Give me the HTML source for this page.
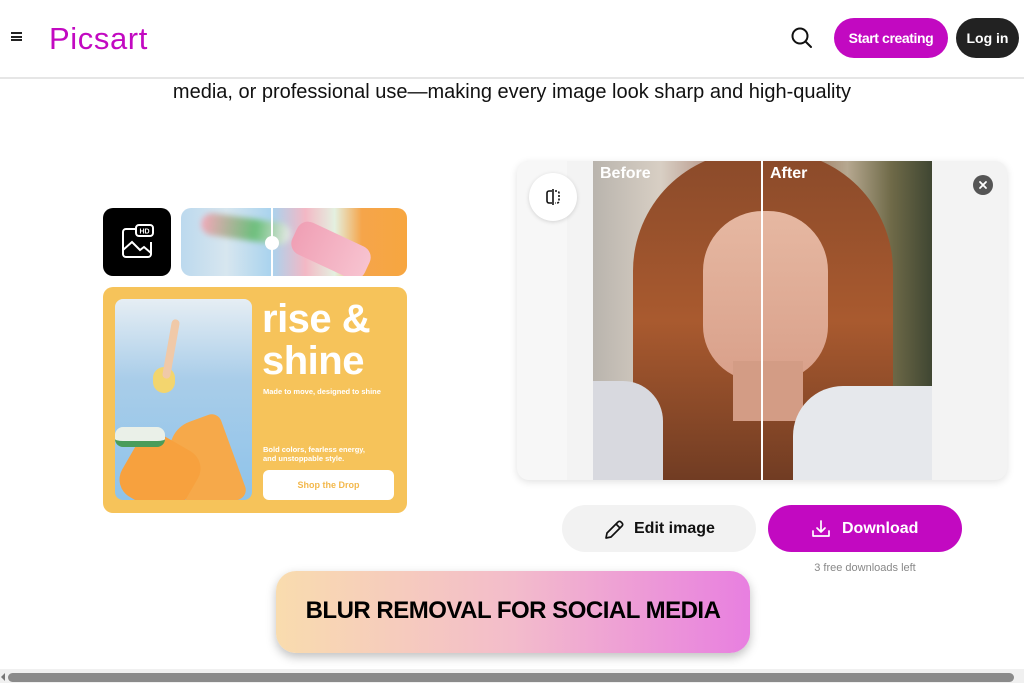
<!DOCTYPE html>
<html><head><meta charset="utf-8"><style>
*{box-sizing:border-box;margin:0;padding:0}
body{width:1024px;height:683px;overflow:hidden;background:#fff;font-family:"Liberation Sans",sans-serif;position:relative}
.abs{position:absolute}
</style></head><body>
<!-- header -->
<div class="abs" style="left:11px;top:32px;width:11px;height:9px;border-top:2px solid #222;border-bottom:2px solid #222"><div style="margin-top:1.5px;height:2px;background:#222"></div></div>
<div class="abs" style="left:49px;top:21px;font-size:31px;color:#c209c1;letter-spacing:0.6px">Picsart</div>
<svg class="abs" style="left:790px;top:26px" width="24" height="24" viewBox="0 0 24 24"><circle cx="10" cy="10" r="7.5" fill="none" stroke="#111" stroke-width="2"/><path d="M15.5 15.5L21 21" stroke="#111" stroke-width="2" stroke-linecap="round"/></svg>
<div class="abs" style="left:834px;top:18px;width:114px;height:40px;border-radius:20px;background:#c209c1;color:#fff;font-size:14px;font-weight:bold;text-align:center;line-height:40px;letter-spacing:-0.4px">Start creating</div>
<div class="abs" style="left:956px;top:18px;width:63px;height:40px;border-radius:20px;background:#222;color:#fff;font-size:14px;font-weight:bold;text-align:center;line-height:40px">Log in</div>
<div class="abs" style="left:0;top:77px;width:1024px;height:2px;background:#e6e6e6"></div>
<div class="abs" style="left:0;top:81px;width:1024px;text-align:center;font-size:20px;color:#111">media, or professional use—making every image look sharp and high-quality</div>

<!-- left composite -->
<div class="abs" style="left:103px;top:208px;width:68px;height:68px;border-radius:10px;background:#000"></div>
<svg class="abs" style="left:119px;top:222px" width="40" height="40" viewBox="0 0 40 40" fill="none" stroke="#fff" stroke-width="2"><path d="M16 7H7a3 3 0 0 0-3 3v22a3 3 0 0 0 3 3h22a3 3 0 0 0 3-3v-12"/><rect x="17" y="3" width="17" height="11" rx="3" fill="#000"/><text x="25.5" y="11.5" fill="#fff" stroke="none" font-size="7" font-weight="bold" text-anchor="middle" font-family="Liberation Sans">HD</text><path d="M4 28l9-8 8 8 4-3 7 6"/></svg>
<div class="abs" style="left:181px;top:208px;width:226px;height:68px;border-radius:10px;overflow:hidden;background:linear-gradient(90deg,#bcd9ee 0%,#d7e6ef 20%,#a9d3ee 40%,#f3b8c5 55%,#e4f0e0 68%,#f5a54a 80%,#f7a640 100%)">
 <div class="abs" style="left:20px;top:10px;width:90px;height:22px;border-radius:11px;background:linear-gradient(90deg,#f2a8b8,#6cbf7c 60%,#e9e9e9);filter:blur(3px);transform:rotate(8deg)"></div>
 <div class="abs" style="left:110px;top:25px;width:80px;height:35px;border-radius:12px;background:linear-gradient(90deg,#f0a0b5,#f7c3d0);transform:rotate(25deg)"></div>
 <div class="abs" style="left:90px;top:0;width:2px;height:68px;background:#fff"></div>
 <div class="abs" style="left:84px;top:28px;width:14px;height:14px;border-radius:7px;background:#fff"></div>
</div>
<div class="abs" style="left:103px;top:287px;width:304px;height:226px;border-radius:10px;background:#f6c35a"></div>
<div class="abs" style="left:115px;top:299px;width:137px;height:201px;border-radius:8px;overflow:hidden;background:linear-gradient(180deg,#e6eef4 0%,#a9cde9 40%,#8ec3ea 100%)">
 <div class="abs" style="left:60px;top:120px;width:60px;height:90px;background:#f6a94a;border-radius:30px 10px 10px 10px;transform:rotate(-20deg)"></div>
 <div class="abs" style="left:10px;top:140px;width:70px;height:70px;background:#f7a13e;border-radius:20px;transform:rotate(30deg)"></div>
 <div class="abs" style="left:38px;top:68px;width:22px;height:26px;border-radius:11px;background:#f3d56e"></div>
 <div class="abs" style="left:52px;top:20px;width:8px;height:60px;background:#f0c9a8;border-radius:4px;transform:rotate(10deg)"></div>
 <div class="abs" style="left:0;top:128px;width:50px;height:20px;background:#eaf0e8;border-radius:8px;border-bottom:6px solid #4a9c5a"></div>
</div>
<div class="abs" style="left:262px;top:298px;font-size:40px;font-weight:bold;color:#fff;line-height:42px;letter-spacing:-0.5px">rise &amp;<br>shine</div>
<div class="abs" style="left:263px;top:387px;font-size:7.5px;font-weight:bold;color:#fff">Made to move, designed to shine</div>
<div class="abs" style="left:263px;top:445px;font-size:7.5px;font-weight:bold;color:#fff;line-height:9px">Bold colors, fearless energy,<br>and unstoppable style.</div>
<div class="abs" style="left:263px;top:470px;width:131px;height:30px;border-radius:6px;background:#fff;color:#f3b84c;font-size:9px;font-weight:bold;text-align:center;line-height:30px">Shop the Drop</div>

<!-- before/after card -->
<div class="abs" style="left:517px;top:161px;width:490px;height:319px;border-radius:12px;background:#f3f3f3;box-shadow:0 2px 8px rgba(0,0,0,.12);overflow:hidden">
 <div class="abs" style="left:0;top:0;width:50px;height:319px;background:#f7f7f7"></div>
 <div class="abs" style="left:76px;top:0;width:339px;height:319px;overflow:hidden;background:linear-gradient(90deg,#b9b4ad 0%,#d8cfc4 20%,#a17060 45%,#8e5a42 55%,#b6a890 75%,#6f6a48 88%,#3f4632 100%)">
  <div class="abs" style="left:40px;top:-10px;width:260px;height:340px;border-radius:120px 120px 40px 40px;background:linear-gradient(180deg,#8a4a2a,#a95a2f 50%,#6d3a22)"></div>
  <div class="abs" style="left:110px;top:50px;width:125px;height:170px;border-radius:60px 60px 55px 55px;background:linear-gradient(180deg,#e6b8a2,#d9a08a)"></div>
  <div class="abs" style="left:140px;top:200px;width:70px;height:60px;background:#d39c85"></div>
  <div class="abs" style="left:200px;top:225px;width:139px;height:100px;border-radius:50px 0 0 0;background:#e6e8ec"></div>
  <div class="abs" style="left:0;top:220px;width:70px;height:100px;border-radius:0 40px 0 0;background:#d8d9df"></div>
  <div class="abs" style="left:168px;top:0;width:2px;height:319px;background:#fff"></div>
  <div class="abs" style="left:7px;top:4px;font-size:16px;font-weight:bold;color:#fff">Before</div>
  <div class="abs" style="left:177px;top:4px;font-size:16px;font-weight:bold;color:#fff">After</div>
 </div>
 <div class="abs" style="left:12px;top:12px;width:48px;height:48px;border-radius:24px;background:#fff;box-shadow:0 1px 4px rgba(0,0,0,.15)"></div>
 <svg class="abs" style="left:26px;top:26px" width="20" height="20" viewBox="0 0 20 20" fill="none" stroke="#111" stroke-width="1.6"><path d="M10 2v16M9 4H6a2 2 0 0 0-2 2v8a2 2 0 0 0 2 2h3"/><path d="M12 4h2a2 2 0 0 1 2 2v8a2 2 0 0 1-2 2h-2" stroke-dasharray="2 1.5"/></svg>
 <div class="abs" style="left:456px;top:14px;width:20px;height:20px;border-radius:10px;background:#555"></div>
 <svg class="abs" style="left:461px;top:19px" width="10" height="10" viewBox="0 0 10 10"><path d="M2 2l6 6M8 2l-6 6" stroke="#fff" stroke-width="1.8" stroke-linecap="round"/></svg>
</div>

<!-- buttons -->
<div class="abs" style="left:562px;top:505px;width:194px;height:47px;border-radius:24px;background:#f2f2f2"></div>
<svg class="abs" style="left:603px;top:519px" width="22" height="22" viewBox="0 0 22 22" fill="none" stroke="#111" stroke-width="1.7" stroke-linejoin="round"><path d="M3 19l1-5L15 3a2 2 0 0 1 3 0l1 1a2 2 0 0 1 0 3L8 18z"/><path d="M13 5l4 4"/></svg>
<div class="abs" style="left:634px;top:520px;font-size:16px;font-weight:bold;color:#111">Edit image</div>
<div class="abs" style="left:768px;top:505px;width:194px;height:47px;border-radius:24px;background:#c209c1"></div>
<svg class="abs" style="left:810px;top:518px" width="22" height="22" viewBox="0 0 22 22" fill="none" stroke="#fff" stroke-width="1.7" stroke-linecap="round" stroke-linejoin="round"><path d="M11 3v11M7 10l4 4 4-4M3 13v5h16v-5"/></svg>
<div class="abs" style="left:842px;top:520px;font-size:16px;font-weight:bold;color:#fff">Download</div>
<div class="abs" style="left:768px;top:562px;width:194px;text-align:center;font-size:11px;color:#888">3 free downloads left</div>

<!-- banner -->
<div class="abs" style="left:276px;top:571px;width:474px;height:82px;border-radius:20px;background:linear-gradient(90deg,#f9dcae,#f3bccb 50%,#e87fe0);box-shadow:0 4px 10px rgba(0,0,0,.25);text-align:center;line-height:80px;font-size:24px;font-weight:bold;color:#000;letter-spacing:-0.5px">BLUR REMOVAL FOR SOCIAL MEDIA</div>

<!-- scrollbar -->
<div class="abs" style="left:0;top:669px;width:1024px;height:14px;background:#f0f0f0"></div>
<div class="abs" style="left:8px;top:673px;width:1006px;height:9px;border-radius:5px;background:#8a8a8a"></div>
<div class="abs" style="left:1px;top:673px;width:0;height:0;border-top:4px solid transparent;border-bottom:4px solid transparent;border-right:4px solid #777"></div>
</body></html>
